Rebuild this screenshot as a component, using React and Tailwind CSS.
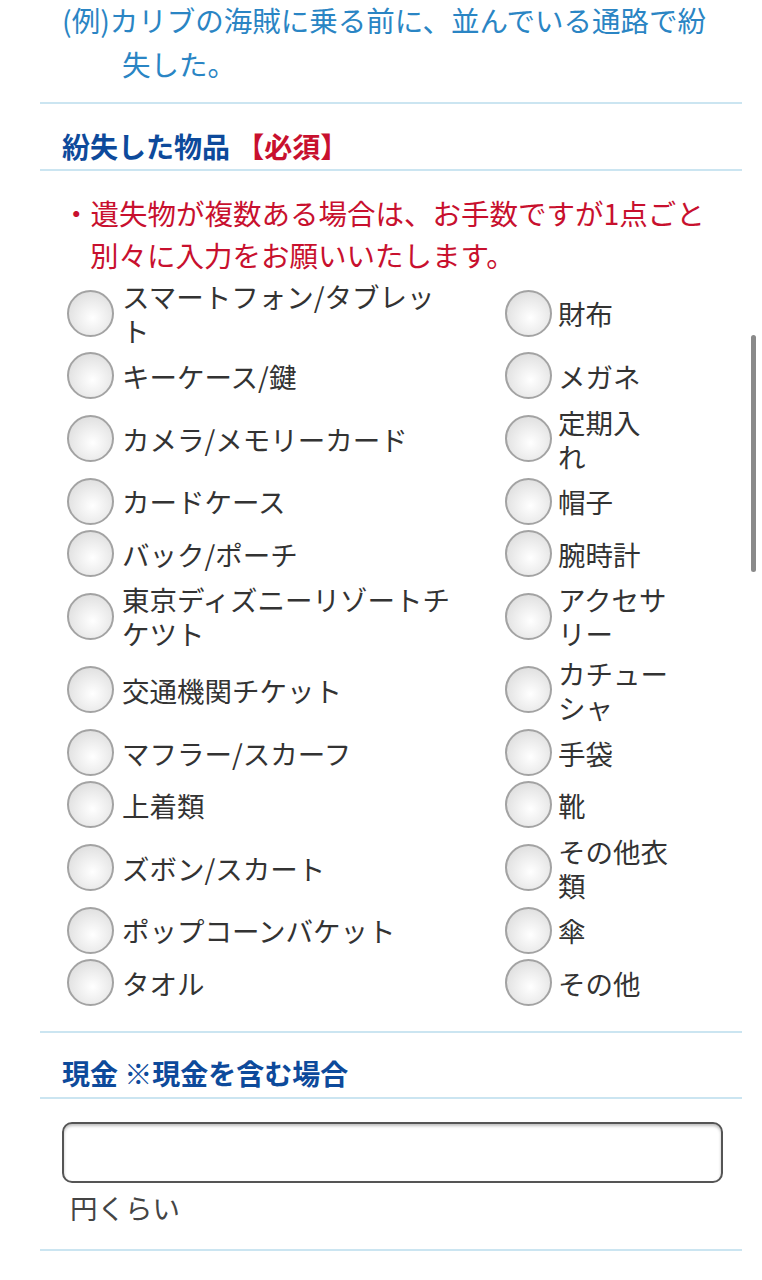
import React from "react";

const FONT = { fontFamily: '"Noto Sans CJK JP", "Noto Sans", sans-serif' };

const rows = [
  [["スマートフォン/タブレッ", "ト"], ["財布"]],
  [["キーケース/鍵"], ["メガネ"]],
  [["カメラ/メモリーカード"], ["定期入", "れ"]],
  [["カードケース"], ["帽子"]],
  [["バック/ポーチ"], ["腕時計"]],
  [["東京ディズニーリゾートチ", "ケツト"], ["アクセサ", "リー"]],
  [["交通機関チケット"], ["カチュー", "シャ"]],
  [["マフラー/スカーフ"], ["手袋"]],
  [["上着類"], ["靴"]],
  [["ズボン/スカート"], ["その他衣", "類"]],
  [["ポップコーンバケット"], ["傘"]],
  [["タオル"], ["その他"]],
];

function Radio({ lines, right }) {
  return (
    <label className={`flex items-center ${right ? "gap-[6px]" : "gap-[8px]"}`}>
      <span
        className="ml-[5px] w-[47px] h-[47px] shrink-0 rounded-full border-2 border-[#a3a3a3]"
        style={{ background: "radial-gradient(circle at 55% 60%, #ffffff 0%, #f1f1f1 35%, #d6d6d6 100%)" }}
      />
      <span className="text-[27.5px] leading-[34px] text-[#333] whitespace-nowrap">
        {lines.map((l, i) => (
          <span key={i} className="block">{l}</span>
        ))}
      </span>
    </label>
  );
}

export default function App() {
  return (
    <div className="relative w-[762px] h-[1280px] overflow-hidden bg-white" style={FONT}>
      <div className="ml-[40px] mr-[20px]">
        {/* example text */}
        <div className="px-[22px] mt-[-2px] text-[28.5px] leading-[44px] text-[#2a85c4]">
          <div className="whitespace-nowrap">(例)カリブの海賊に乗る前に、並んでいる通路で紛</div>
          <div className="pl-[60px] whitespace-nowrap">失した。</div>
        </div>
        <div className="mt-[16px] h-[2px] bg-[#cbe5f1]" />

        {/* heading */}
        <div className="px-[22px] pt-[25px] pb-[6px] text-[28px] leading-[34px] font-bold text-[#0d4a9b] whitespace-nowrap">
          紛失した物品 <span className="text-[#c8102e]">【必須】</span>
        </div>
        <div className="h-[2px] bg-[#cbe5f1]" />

        {/* note */}
        <div className="px-[22px] pt-[21px] text-[28.5px] leading-[42px] text-[#c8102e]">
          <div className="whitespace-nowrap">・遺失物が複数ある場合は、お手数ですが1点ごと</div>
          <div className="pl-[28px] whitespace-nowrap">別々に入力をお願いいたします。</div>
        </div>

        {/* radios */}
        <div className="px-[22px] mt-[3px] grid grid-cols-[438px_1fr] gap-y-[5.3px] items-center">
          {rows.map(([l, r], i) => (
            <React.Fragment key={i}>
              <Radio lines={l} />
              <Radio lines={r} right />
            </React.Fragment>
          ))}
        </div>
        <div className="mt-[25px] h-[2px] bg-[#cbe5f1]" />

        {/* cash heading */}
        <div className="px-[22px] pt-[23px] pb-[7px] text-[28px] leading-[34px] font-bold text-[#0d4a9b] whitespace-nowrap">
          現金 ※現金を含む場合
        </div>
        <div className="h-[2px] bg-[#cbe5f1]" />

        <div className="px-[22px] pt-[23px]">
          <div className="mr-[-3px] h-[61px] rounded-[10px] border-2 border-[#555] bg-white shadow-[inset_0_2px_3px_rgba(0,0,0,0.25)]" />
          <div className="pl-[8px] pt-[7px] text-[27.5px] leading-[34px] text-[#444]">円くらい</div>
        </div>
        <div className="mt-[25px] h-[2px] bg-[#cbe5f1]" />
      </div>

      {/* overlay scrollbar */}
      <div className="absolute left-[751px] top-[335px] w-[5px] h-[237px] rounded-full bg-[#8a8a8a]" />
    </div>
  );
}
